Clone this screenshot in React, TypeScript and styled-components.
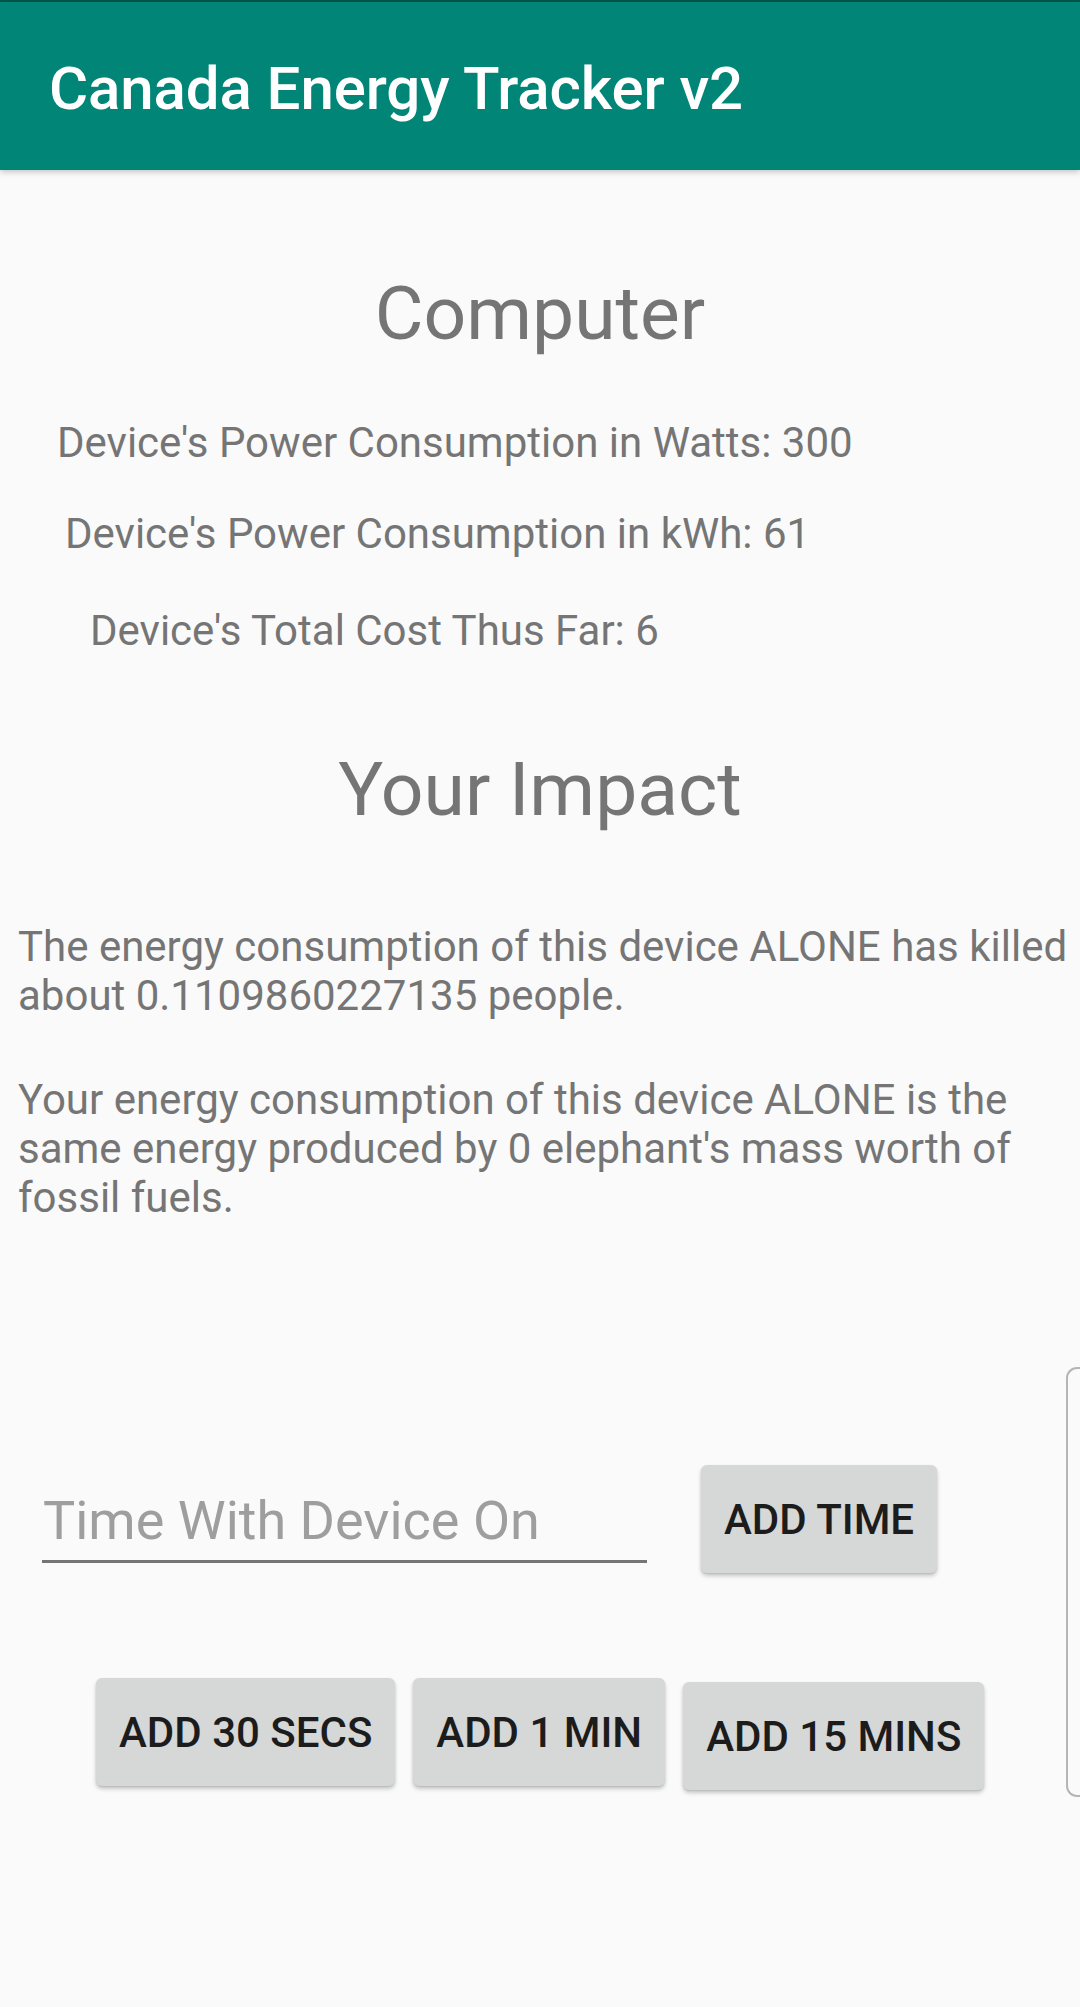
import React from "react";
import styled, { createGlobalStyle } from "styled-components";

const GlobalStyle = createGlobalStyle`
    html, body {
        margin: 0;
        padding: 0;
        background: #fafafa;
    }
    body {
        font-family: Roboto, "Noto Sans", "Liberation Sans", sans-serif;
    }
`;

const Screen = styled.div`
    position: relative;
    min-height: 100vh;
    background: #fafafa;
    overflow: hidden;
`;

const StatusLine = styled.div`
    height: 2px;
    background: #00574b;
`;

const Toolbar = styled.header`
    position: relative;
    z-index: 1;
    height: 168px;
    display: flex;
    align-items: center;
    padding: 6px 0 0 49px;
    box-sizing: border-box;
    background: #008577;
    box-shadow: 0 2px 6px rgba(0, 0, 0, 0.22);
`;

const Title = styled.h1`
    margin: 0;
    font-size: 60px;
    font-weight: 500;
    line-height: 1.171;
    letter-spacing: -0.1px;
    color: #ffffff;
`;

const Heading = styled.h2<{ top: number }>`
    margin: ${(p) => p.top}px 0 0;
    font-size: 75px;
    font-weight: 400;
    line-height: 1.171;
    text-align: center;
    color: #757575;
`;

const Stat = styled.p<{ indent: number; top: number }>`
    margin: ${(p) => p.top}px 0 0;
    padding-left: ${(p) => p.indent}px;
    font-size: 42px;
    line-height: 49.2px;
    color: #757575;
`;

const Paragraph = styled.p<{ top: number }>`
    margin: ${(p) => p.top}px 0 0;
    padding: 0 0 0 18px;
    font-size: 42px;
    line-height: 49.2px;
    color: #757575;
`;

const InputRow = styled.div`
    display: flex;
    align-items: flex-start;
    gap: 54px;
    margin-top: 243px;
    padding-left: 42px;
`;

const Field = styled.div`
    width: 605px;
    margin-top: 24px;
    padding: 0 0 8px 1px;
    box-sizing: border-box;
    border-bottom: 3px solid #757575;
    font-size: 54px;
    line-height: 1.171;
    color: #9e9e9e;
`;

const ButtonRow = styled.div`
    display: flex;
    align-items: flex-start;
    gap: 18px;
    margin-top: 105px;
    padding-left: 96px;
`;

const Button = styled.button<{ shift?: number }>`
    height: 108px;
    margin-top: ${(p) => p.shift ?? 0}px;
    padding: 0 23px;
    border: none;
    border-radius: 6px;
    background: #d6d7d7;
    box-shadow: 0 3px 4px rgba(0, 0, 0, 0.2), 0 1px 2px rgba(0, 0, 0, 0.1);
    font-family: Roboto, "Noto Sans", "Liberation Sans", sans-serif;
    font-size: 42px;
    font-weight: 500;
    color: #1c1c1c;
    white-space: nowrap;
`;

const EdgeHandle = styled.div`
    position: absolute;
    top: 1367px;
    right: 0;
    width: 12px;
    height: 426px;
    border: 2px solid #b5b5b5;
    border-right: none;
    border-radius: 11px 0 0 11px;
`;

export default function App() {
    return (
        <Screen>
            <GlobalStyle />
            <StatusLine />
            <Toolbar>
                <Title>Canada Energy Tracker v2</Title>
            </Toolbar>

            <Heading top={100}>Computer</Heading>
            <Stat indent={57} top={60}>
                Device's Power Consumption in Watts: 300
            </Stat>
            <Stat indent={65} top={42}>
                Device's Power Consumption in kWh: 61
            </Stat>
            <Stat indent={90} top={48}>
                Device's Total Cost Thus Far: 6
            </Stat>

            <Heading top={91}>Your Impact</Heading>
            <Paragraph top={88}>
                The energy consumption of this device ALONE has killed about
                0.1109860227135 people.
            </Paragraph>
            <Paragraph top={54}>
                Your energy consumption of this device ALONE is the same energy
                produced by 0 elephant's mass worth of fossil fuels.
            </Paragraph>

            <InputRow>
                <Field>Time With Device On</Field>
                <Button>ADD TIME</Button>
            </InputRow>

            <ButtonRow>
                <Button>ADD 30 SECS</Button>
                <Button>ADD 1 MIN</Button>
                <Button shift={4}>ADD 15 MINS</Button>
            </ButtonRow>

            <EdgeHandle />
        </Screen>
    );
}
